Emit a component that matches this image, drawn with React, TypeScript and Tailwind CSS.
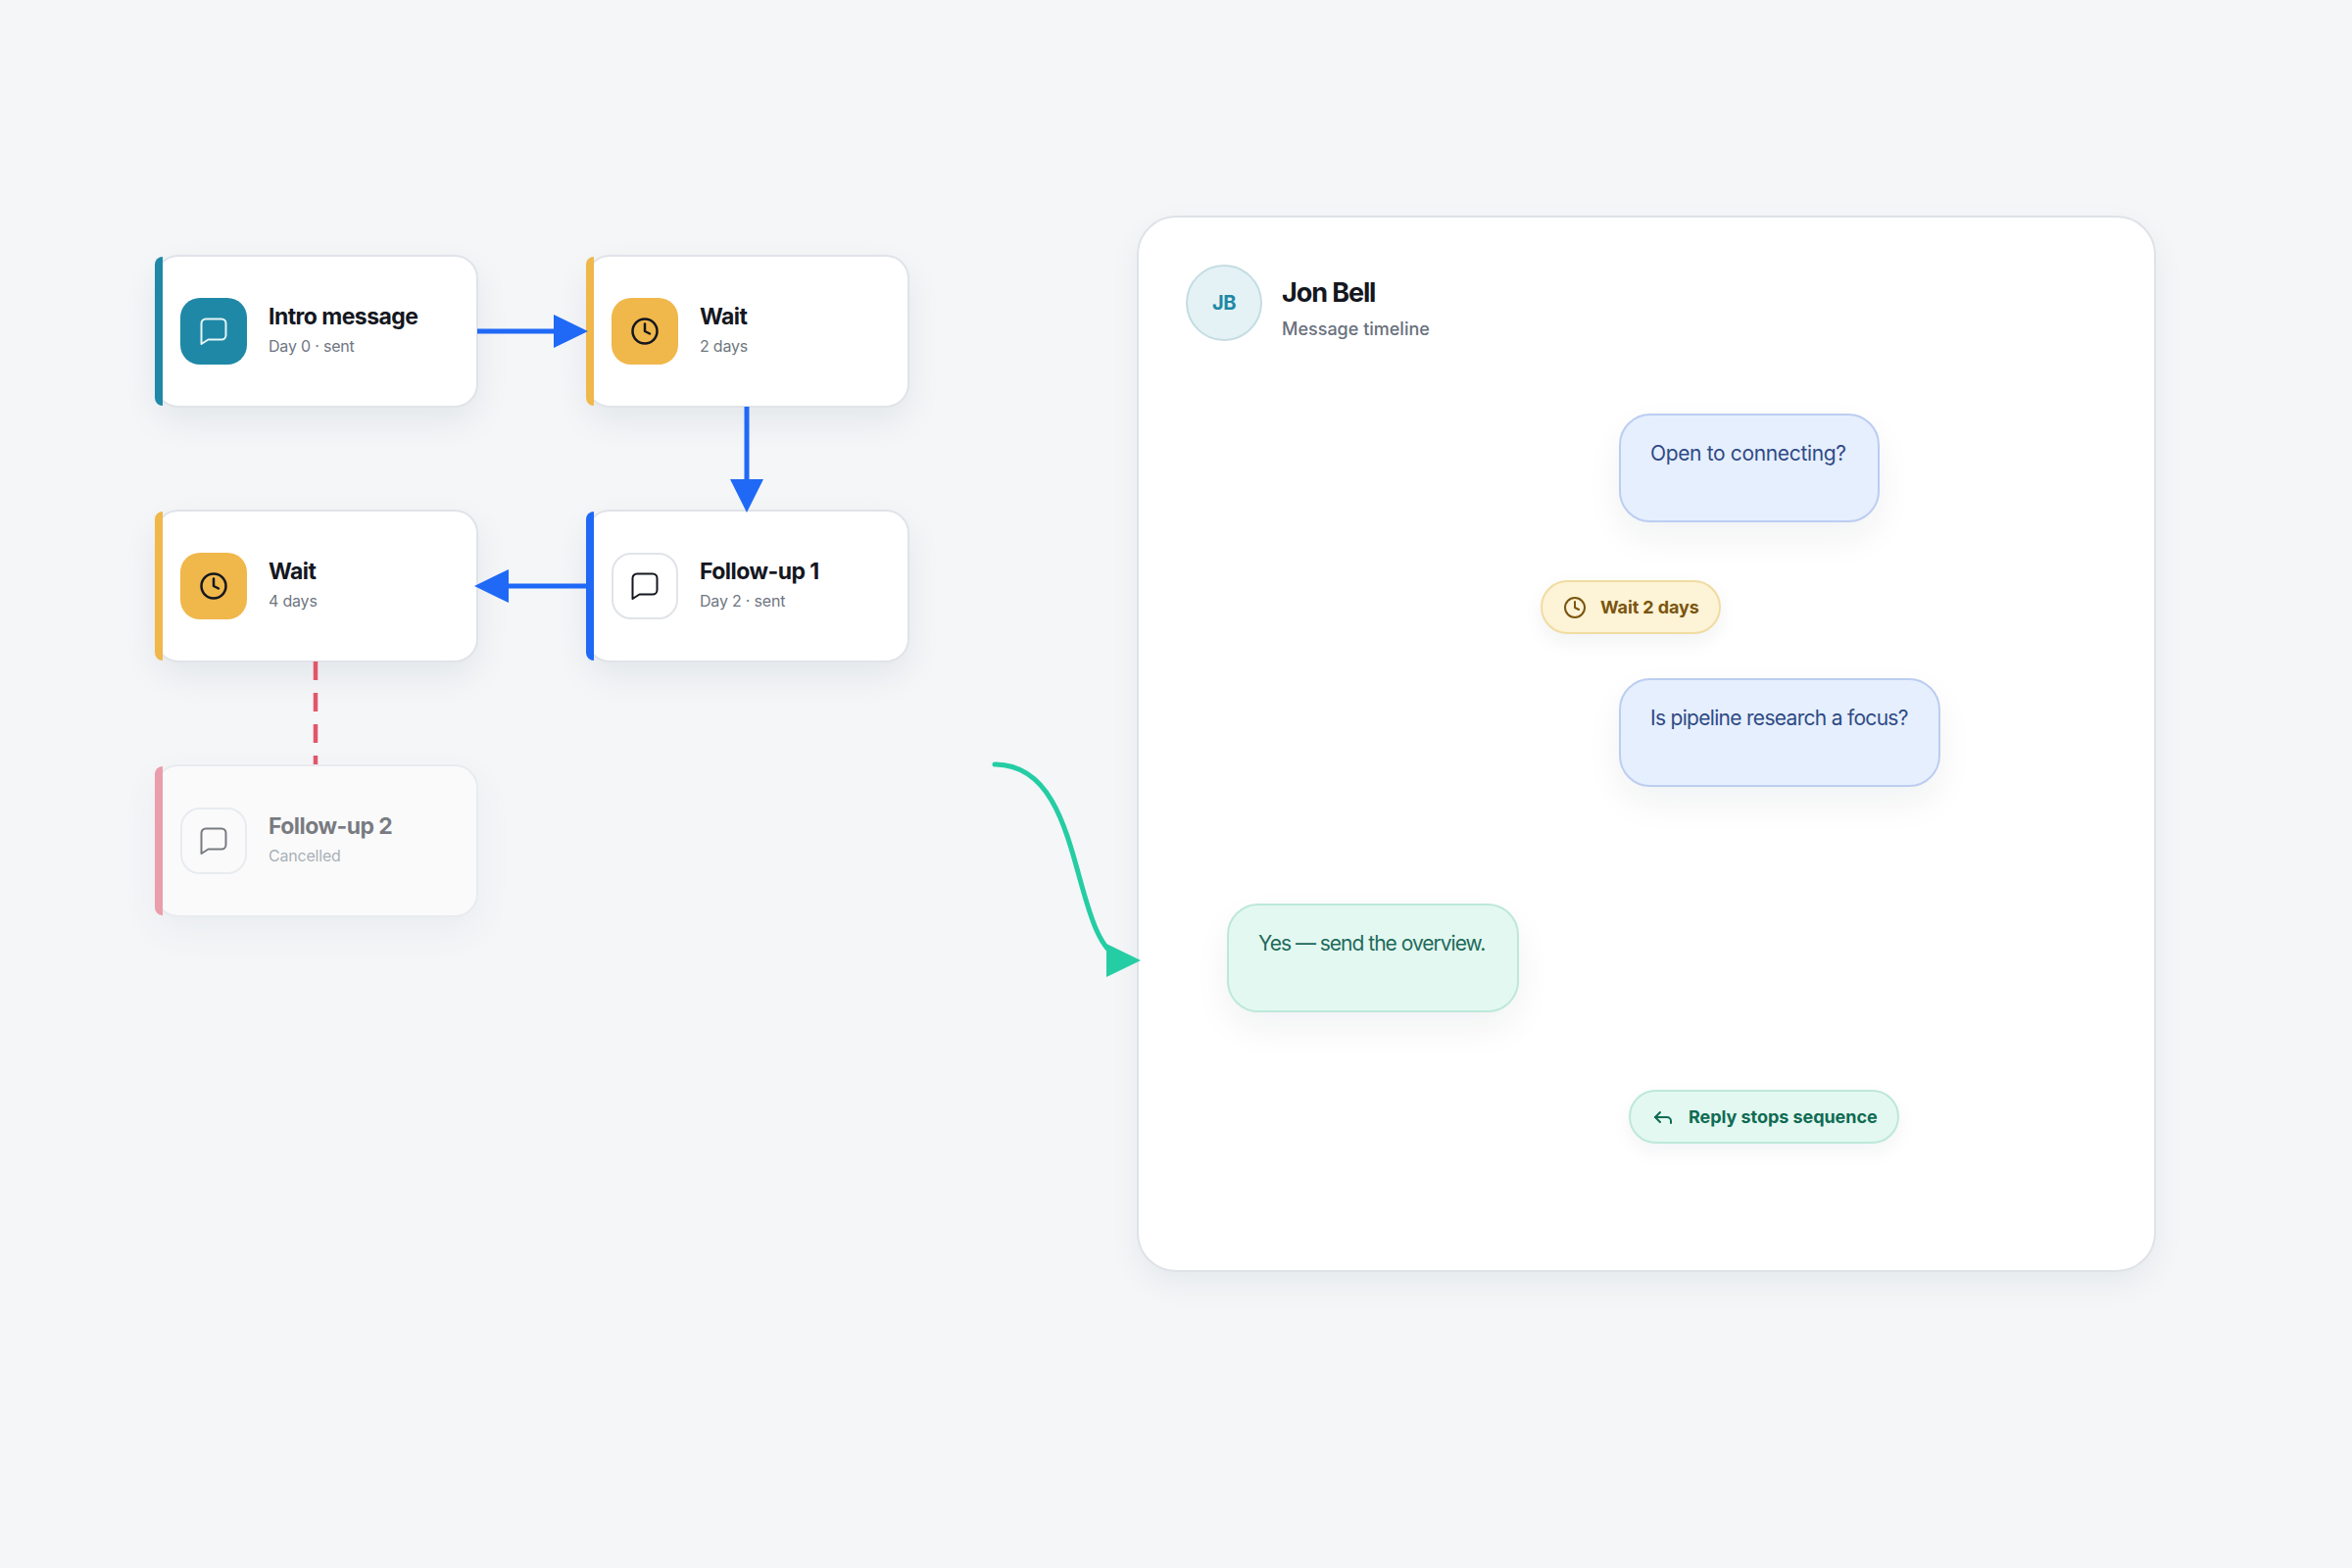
import React from 'react';
import { Clock, Reply } from 'lucide-react';

type NodeProps = {
    title: string;
    sub: string;
    accent: string;
    iconBox: string;
    icon: React.ReactNode;
    faded?: boolean;
};

// chat glyph: squarer than lucide's message-square, short tail at bottom-left
const ChatIcon: React.FC<{ className: string; strokeWidth?: number }> = ({ className, strokeWidth = 2 }) => {
    return (
        <svg width="32" height="32" viewBox="0 0 32 32" fill="none" stroke="currentColor" strokeWidth={strokeWidth} strokeLinejoin="round" className={className}>
            <path d="M8 3.5H24a4.5 4.5 0 0 1 4.5 4.5V20a4.5 4.5 0 0 1-4.5 4.5H10.5L3.5 29V8A4.5 4.5 0 0 1 8 3.5Z" />
        </svg>
    );
};

const FlowNode: React.FC<NodeProps> = ({ title, sub, accent, iconBox, icon, faded }) => {
    return (
        <div className={`relative flex h-[156px] w-[330px] items-center gap-[22px] rounded-[24px] border-2 border-[#e0e3e8] bg-white pl-[24px] shadow-[0_14px_36px_rgba(20,30,50,0.07)] ${faded ? 'opacity-[0.55]' : ''}`}>
            <div className={`absolute -left-0.5 top-0 bottom-0 w-2 rounded-l-lg ${accent}`}></div>
            <div className={`flex h-[68px] w-[68px] items-center justify-center rounded-[20px] ${iconBox}`}>{icon}</div>
            <div className="flex flex-col -translate-y-[3px]">
                <span className="text-[23px] leading-[36px] font-bold tracking-[-0.55px] text-[#14171f]">{title}</span>
                <span className="text-[16px] leading-[24px] tracking-[-0.2px] text-[#6f7682]">{sub}</span>
            </div>
        </div>
    );
};

// connectors sit over the cards, tips touch the card edges
const Connectors: React.FC = () => {
    return (
        <svg className="pointer-events-none absolute inset-0 z-10 h-full w-full" viewBox="0 0 2400 1600" fill="none">
            <path d="M487 338H570" stroke="#1f69f6" strokeWidth="5" />
            <path d="M565 321L600 338L565 355Z" fill="#1f69f6" />
            <path d="M762 415V494" stroke="#1f69f6" strokeWidth="5" />
            <path d="M745 489H779L762 523Z" fill="#1f69f6" />
            <path d="M598 598H515" stroke="#1f69f6" strokeWidth="5" />
            <path d="M519 581L484 598L519 615Z" fill="#1f69f6" />
            <path d="M322 675V780" stroke="#e2566b" strokeWidth="4.5" strokeDasharray="19 13" />
            <path d="M1015 780C1110 780 1090 960 1146 980" stroke="#25cda4" strokeWidth="5" strokeLinecap="round" />
            <path d="M1129 963L1164 980L1129 997Z" fill="#25cda4" />
        </svg>
    );
};

const App: React.FC = () => {
    return (
        <div className="relative flex h-[1600px] w-[2400px] items-start bg-[#f4f6f8] pl-[158px] pt-[220px] font-['Inter',sans-serif]">
            <Connectors />

            <div className="mt-[40px] grid grid-cols-[330px_330px] gap-x-[110px] gap-y-[104px]">
                <FlowNode
                    title="Intro message"
                    sub="Day 0 · sent"
                    accent="bg-[#1f88a6]"
                    iconBox="bg-[#1f88a6]"
                    icon={<ChatIcon className="text-[#e6f4f7]" />}
                />
                <FlowNode
                    title="Wait"
                    sub="2 days"
                    accent="bg-[#f0b74b]"
                    iconBox="bg-[#f0b74b]"
                    icon={<Clock size={30} strokeWidth={2} className="text-[#14171f]" />}
                />
                <FlowNode
                    title="Wait"
                    sub="4 days"
                    accent="bg-[#f0b74b]"
                    iconBox="bg-[#f0b74b]"
                    icon={<Clock size={30} strokeWidth={2} className="text-[#14171f]" />}
                />
                <FlowNode
                    title="Follow-up 1"
                    sub="Day 2 · sent"
                    accent="bg-[#1f69f6]"
                    iconBox="border-2 border-[#e0e3e8] bg-white"
                    icon={<ChatIcon className="text-[#14171f]" />}
                />
                <FlowNode
                    title="Follow-up 2"
                    sub="Cancelled"
                    accent="bg-[#e2566b]"
                    iconBox="border-2 border-[#e0e3e8] bg-white"
                    icon={<ChatIcon className="text-[#14171f]" />}
                    faded
                />
            </div>

            <div className="ml-[232px] flex h-[1078px] w-[1040px] flex-col items-start rounded-[40px] border-2 border-[#dfe2e7] bg-white pl-[48px] pt-[48px] shadow-[0_12px_32px_rgba(20,30,50,0.06)]">
                <div className="flex items-center gap-5">
                    <div className="flex h-[78px] w-[78px] items-center justify-center rounded-full border-2 border-[#c4dde2] bg-[#e4f2f5] text-[20px] font-bold tracking-[-0.5px] text-[#1f88a6]">JB</div>
                    <div className="flex translate-y-[5px] flex-col">
                        <span className="text-[27px] leading-[40px] font-bold tracking-[-1.1px] text-[#14171f]">Jon Bell</span>
                        <span className="mt-[4px] text-[18px] leading-[26px] font-medium text-[#69707d]">Message timeline</span>
                    </div>
                </div>

                <div className="ml-[442px] mt-[74px] h-[111px] w-[266px] rounded-[32px] border-2 border-[#bccdf1] bg-[#e6effe] pl-[30px] pt-[23px] text-[21px] leading-[32px] tracking-[-0.35px] whitespace-nowrap text-[#2f4a85] shadow-[0_16px_36px_rgba(20,30,50,0.06)]">
                    Open to connecting?
                </div>

                <div className="ml-[362px] mt-[59px] flex h-[55px] w-[184px] items-center gap-[14px] rounded-full border-2 border-[#f0dca2] bg-[#fdf3d6] pl-[21px] text-[18px] font-bold tracking-[-0.1px] whitespace-nowrap text-[#7a5510] shadow-[0_8px_20px_rgba(20,30,50,0.06)]">
                    <Clock size={24} strokeWidth={2} />
                    Wait 2 days
                </div>

                <div className="ml-[442px] mt-[45px] h-[111px] w-[328px] rounded-[32px] border-2 border-[#bccdf1] bg-[#e6effe] pl-[30px] pt-[23px] text-[21px] leading-[32px] tracking-[-0.7px] whitespace-nowrap text-[#2f4a85] shadow-[0_16px_36px_rgba(20,30,50,0.06)]">
                    Is pipeline research a focus?
                </div>

                <div className="ml-[42px] mt-[119px] h-[111px] w-[298px] rounded-[32px] border-2 border-[#bde8da] bg-[#e3f8f0] pl-[30px] pt-[23px] text-[21px] leading-[32px] tracking-[-1px] whitespace-nowrap text-[#1f6a5c] shadow-[0_16px_36px_rgba(20,30,50,0.06)]">
                    Yes — send the overview.
                </div>

                <div className="ml-[452px] mt-[79px] flex h-[55px] w-[276px] items-center gap-[14px] rounded-full border-2 border-[#bde8da] bg-[#e3f8f0] pl-[21px] text-[18px] font-bold tracking-[-0.05px] whitespace-nowrap text-[#0f6b54] shadow-[0_8px_20px_rgba(20,30,50,0.05)]">
                    <Reply size={24} strokeWidth={2} />
                    Reply stops sequence
                </div>
            </div>
        </div>
    );
};

export default App;
